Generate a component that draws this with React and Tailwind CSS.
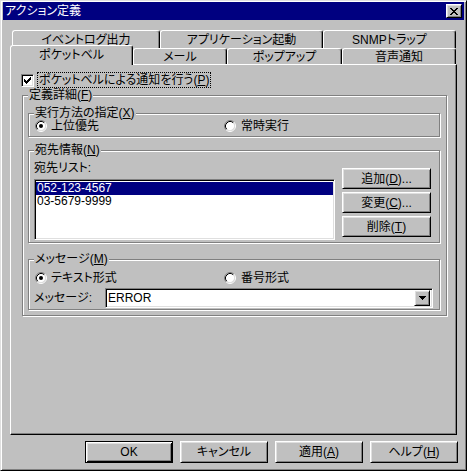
import React from "react";

const raised =
  "border border-t-white border-l-white border-r-black border-b-black bg-[#c0c0c0] shadow-[inset_1px_1px_#dfdfdf,inset_-1px_-1px_#808080]";
const sunken =
  "border border-t-[#808080] border-l-[#808080] border-r-white border-b-white bg-white shadow-[inset_1px_1px_#000,inset_-1px_-1px_#dfdfdf]";
const etched = "border border-[#808080] shadow-[inset_1px_1px_#fff,1px_1px_#fff]";

// tiny pixel glyphs (close X, checkmark, combo arrow)
const Pixels = ({ rows, className = "" }) => (
  <svg
    width={rows[0].length}
    height={rows.length}
    className={`shrink-0 ${className}`}
    shapeRendering="crispEdges"
  >
    {rows.map((r, y) =>
      r.split("").map((c, x) =>
        c === "#" ? <rect key={`${x}-${y}`} x={x} y={y} width="1" height="1" fill="#000" /> : null
      )
    )}
  </svg>
);

const closeX = ["##....##", ".##..##.", "..####..", "...##...", "..####..", ".##..##.", "##....##"];
const check = ["......#", ".....##", "#...###", "##.###.", "#####..", ".###...", "..#...."];
const arrow = ["#######", ".#####.", "..###..", "...#..."];

const Radio = ({ checked }) => (
  <svg width="12" height="12" viewBox="0 0 12 12" className="shrink-0">
    <circle cx="6" cy="6" r="4.5" fill="#fff" />
    <path d="M2.11 9.89A5.5 5.5 0 0 1 9.89 2.11" stroke="#808080" fill="none" />
    <path d="M9.89 2.11A5.5 5.5 0 0 1 2.11 9.89" stroke="#fff" fill="none" />
    <path d="M2.82 9.18A4.5 4.5 0 0 1 9.18 2.82" stroke="#000" fill="none" />
    <path d="M9.18 2.82A4.5 4.5 0 0 1 2.82 9.18" stroke="#dfdfdf" fill="none" />
    {checked && <circle cx="6" cy="6" r="2" fill="#000" />}
  </svg>
);

const Group = ({ label, className, children }) => (
  <div className={`${etched} ${className}`}>
    <div className="-mt-[7px] ml-[5px] w-fit bg-[#c0c0c0] px-[1px] h-[12px] leading-[12px] whitespace-nowrap">
      {label}
    </div>
    {children}
  </div>
);

const Key = ({ k }) => (
  <>
    (<u className="underline-offset-[1px]">{k}</u>)
  </>
);

const Tab = ({ label, w, selected }) => (
  <div
    className={`${w} flex justify-center rounded-t-[3px] border-t border-l border-r border-t-white border-l-white border-r-black bg-[#c0c0c0] shadow-[inset_-1px_0_#808080] whitespace-nowrap ${
      selected ? "relative z-10 h-[20px] -mt-[3px] items-start pt-[3px]" : "h-full items-center"
    }`}
  >
    {label}
  </div>
);

const Button = ({ children, className = "" }) => (
  <div className={`${raised} flex items-center justify-center whitespace-nowrap ${className}`}>{children}</div>
);

export default function App() {
  return (
    <div className="w-[467px] h-[471px] overflow-hidden bg-[#c0c0c0] border border-t-[#dfdfdf] border-l-[#dfdfdf] border-r-black border-b-black shadow-[inset_1px_1px_#fff,inset_-1px_-1px_#808080] px-[2px] pt-[1px] flex flex-col text-[12px] leading-[12px] text-black font-['Liberation_Sans','Noto_Sans_CJK_JP',sans-serif] [font-feature-settings:'palt']">
      {/* title bar */}
      <div className="h-[18px] bg-[#000080] flex items-center justify-between pl-[2px] pr-[2px] shrink-0">
        <span className="text-white">アクション定義</span>
        <div className={`${raised} w-[16px] h-[14px] flex items-center justify-center`}>
          <Pixels rows={closeX} />
        </div>
      </div>

      {/* tabs */}
      <div className="mt-[10px] flex h-[18px] ml-[9px] shrink-0">
        <Tab label="イベントログ出力" w="w-[148px]" />
        <Tab label="アプリケーション起動" w="w-[163px]" />
        <Tab label="SNMPトラップ" w="w-[133px]" />
      </div>
      <div className="flex items-start h-[16px] ml-[7px] shrink-0">
        <Tab label="ポケットベル" w="w-[123px]" selected />
        <Tab label="メール" w="w-[94px]" />
        <Tab label="ポップアップ" w="w-[115px]" />
        <Tab label="音声通知" w="w-[114px]" />
      </div>

      {/* tab panel */}
      <div className="ml-[7px] w-[447px] h-[371px] shrink-0 border border-t-white border-l-white border-r-black border-b-black shadow-[inset_-1px_-1px_#808080] flex flex-col items-start">
        <div className="mt-[7px] ml-[10px] h-[16px] flex items-center gap-[3px]">
          <div className={`${sunken} w-[13px] h-[13px] flex items-center justify-center`}>
            <Pixels rows={check} />
          </div>
          <div className="h-[16px] px-[1px] border border-dotted border-black flex items-center whitespace-nowrap">
            ポケットベルによる通知を行う<Key k="P" />
          </div>
        </div>

        <Group label={<>定義詳細<Key k="F" /></>} className="mt-[7px] ml-[11px] w-[425px] h-[221px]">
          <Group label={<>実行方法の指定<Key k="X" /></>} className="mt-[12px] ml-[5px] w-[412px] h-[24px]">
            <div className="mt-[1px] flex items-center h-[12px] ml-[6px]">
              <div className="w-[189px] flex items-center gap-[4px]">
                <Radio checked />
                <span>上位優先</span>
              </div>
              <div className="flex items-center gap-[5px]">
                <Radio />
                <span>常時実行</span>
              </div>
            </div>
          </Group>

          <Group label={<>宛先情報<Key k="N" /></>} className="mt-[13px] ml-[5px] w-[412px] h-[93px]">
            <div className="mt-[6px] ml-[5px] flex items-start">
              <div className="flex flex-col">
                <span className="h-[12px]">宛先リスト:</span>
                <div className={`${sunken} mt-[5px] w-[301px] h-[61px] pt-[2px] pl-[1px] pr-[1px] flex flex-col`}>
                  <div className="h-[13px] leading-[13px] bg-[#000080] text-white pl-[1px]">052-123-4567</div>
                  <div className="h-[13px] leading-[13px] pl-[1px]">03-5679-9999</div>
                </div>
              </div>
              <div className="ml-[7px] mt-[6px] flex flex-col gap-[3px]">
                <Button className="w-[89px] h-[21px]">
                  追加<Key k="D" />...
                </Button>
                <Button className="w-[89px] h-[21px]">
                  変更<Key k="C" />...
                </Button>
                <Button className="w-[89px] h-[21px]">
                  削除<Key k="T" />
                </Button>
              </div>
            </div>
          </Group>

          <Group label={<>メッセージ<Key k="M" /></>} className="mt-[16px] ml-[5px] w-[412px] h-[51px]">
            <div className="mt-[7px] flex items-center h-[12px] ml-[6px]">
              <div className="w-[189px] flex items-center gap-[4px]">
                <Radio checked />
                <span>テキスト形式</span>
              </div>
              <div className="flex items-center gap-[5px]">
                <Radio />
                <span>番号形式</span>
              </div>
            </div>
            <div className="mt-[4px] ml-[5px] flex items-center">
              <span className="w-[71px]">メッセージ:</span>
              <div className={`${sunken} w-[328px] h-[20px] flex items-center justify-between pl-[2px] pr-[2px]`}>
                <span>ERROR</span>
                <div className={`${raised} w-[16px] h-[16px] flex items-center justify-center`}>
                  <Pixels rows={arrow} />
                </div>
              </div>
            </div>
          </Group>
        </Group>
      </div>

      {/* dialog buttons */}
      <div className="mt-[6px] pr-[6px] flex justify-end gap-[7px] shrink-0">
        <div className="w-[88px] h-[22px] flex items-center justify-center bg-[#c0c0c0] border border-black shadow-[inset_1px_1px_#fff,inset_-1px_-1px_#000,inset_2px_2px_#dfdfdf,inset_-2px_-2px_#808080]">
          OK
        </div>
        <Button className="w-[88px] h-[22px]">キャンセル</Button>
        <Button className="w-[88px] h-[22px]">
          適用<Key k="A" />
        </Button>
        <Button className="w-[88px] h-[22px]">
          ヘルプ<Key k="H" />
        </Button>
      </div>
    </div>
  );
}
